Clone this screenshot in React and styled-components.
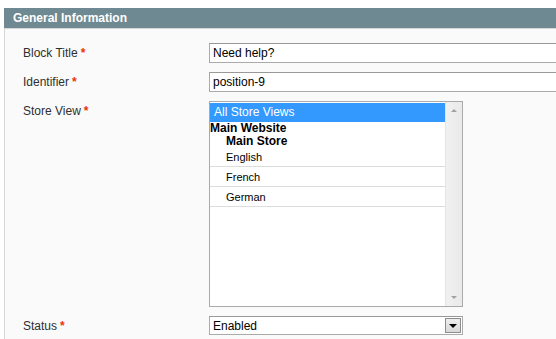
import styled, { createGlobalStyle } from "styled-components";

const Global = createGlobalStyle`
    html, body {
        margin: 0;
        padding: 0;
        background: #ffffff;
        overflow: hidden;
        font-family: Arial, "Liberation Sans", sans-serif;
    }
`

const Fieldset = styled.div`
    margin: 8px 0 0 4px;
    width: 552px;
`

const Legend = styled.div`
    height: 20px;
    background: #6f8992;
    color: #ffffff;
    font-weight: bold;
    font-size: 12px;
    line-height: 20px;
    padding-left: 9px;
    border-bottom: 1px solid #d6d6d6;
`

const Body = styled.div`
    background: #fafafa;
    border-left: 1px solid #d6d6d6;
    padding: 14px 0 10px 18px;
    display: flex;
    flex-direction: column;
    gap: 9px;
`

const Row = styled.div`
    display: grid;
    grid-template-columns: 186px 1fr;
`

const Label = styled.div`
    font-size: 12px;
    color: #2f2f2f;
    line-height: 14px;
    padding-top: 3px;
    .req{
        color: #eb340a;
        font-weight: bold;
        margin-left: 3px;
    }
`

const Input = styled.div`
    width: 360px;
    height: 18px;
    border: 1px solid #aaaaaa;
    border-top-color: #999999;
    background: #ffffff;
    font-size: 12px;
    line-height: 18px;
    padding-left: 3px;
    color: #000000;
    white-space: nowrap;
`

const ListBox = styled.div`
    width: 252px;
    height: 204px;
    border: 1px solid #aaaaaa;
    background: #ffffff;
    display: flex;
`

const Options = styled.div`
    flex: 1;
    padding-top: 1px;
`

const Option = styled.div`
    height: ${p => p.$h || 19}px;
    line-height: ${p => p.$h || 19}px;
    padding-left: ${p => p.$indent}px;
    color: ${p => p.$selected ? "#ffffff" : "#000000"};
    background: ${p => p.$selected ? "#3399ff" : "transparent"};
    font-weight: ${p => p.$bold ? "bold" : "normal"};
    border-bottom: ${p => p.$line ? "1px solid #dddddd" : "none"};
    box-sizing: border-box;
    font-size: ${p => (p.$selected || p.$bold) ? 12 : 11}px;
`

const ScrollBar = styled.div`
    width: 16px;
    background: linear-gradient(to right, #f1f1f1, #e9e9e9);
    border-left: 1px solid #e4e4e4;
    display: flex;
    flex-direction: column;
    justify-content: space-between;
    align-items: center;
    padding: 7px 0 7px;
`

const Arrow = styled.div`
    width: 0;
    height: 0;
    border-left: 3px solid transparent;
    border-right: 3px solid transparent;
    ${p => p.$down ? "border-top: 3px solid #a0a0a0;" : "border-bottom: 3px solid #a0a0a0;"}
`

const Select = styled.div`
    width: 249px;
    height: 17px;
    border: 1px solid #aaaaaa;
    border-top-color: #999999;
    background: #ffffff;
    display: flex;
    align-items: center;
    justify-content: space-between;
    font-size: 12px;
    padding-left: 3px;
`

const DropButton = styled.div`
    width: 14px;
    height: 13px;
    margin-right: 1px;
    background: linear-gradient(#eeeeee, #d8d8d8);
    border: 1px solid #8c8c8c;
    display: flex;
    align-items: center;
    justify-content: center;
    &::after{
        content: "";
        border-left: 4px solid transparent;
        border-right: 4px solid transparent;
        border-top: 4px solid #000000;
    }
`

function App(){
    return(
        <Fieldset>
            <Global/>
            <Legend>General Information</Legend>
            <Body>
                <Row>
                    <Label>Block Title<span className="req">*</span></Label>
                    <Input>Need help?</Input>
                </Row>
                <Row>
                    <Label>Identifier<span className="req">*</span></Label>
                    <Input>position-9</Input>
                </Row>
                <Row>
                    <Label>Store View<span className="req">*</span></Label>
                    <ListBox>
                        <Options>
                            <Option $selected $indent={4}>All Store Views</Option>
                            <Option $bold $indent={0} $h={13}>Main Website</Option>
                            <Option $bold $indent={16} $h={13}>Main Store</Option>
                            <Option $indent={16} $line>English</Option>
                            <Option $indent={16} $line $h={20}>French</Option>
                            <Option $indent={16} $line $h={20}>German</Option>
                        </Options>
                        <ScrollBar>
                            <Arrow/>
                            <Arrow $down/>
                        </ScrollBar>
                    </ListBox>
                </Row>
                <Row>
                    <Label>Status<span className="req">*</span></Label>
                    <Select>
                        <span>Enabled</span>
                        <DropButton/>
                    </Select>
                </Row>
            </Body>
        </Fieldset>
    );
}
export default App;
